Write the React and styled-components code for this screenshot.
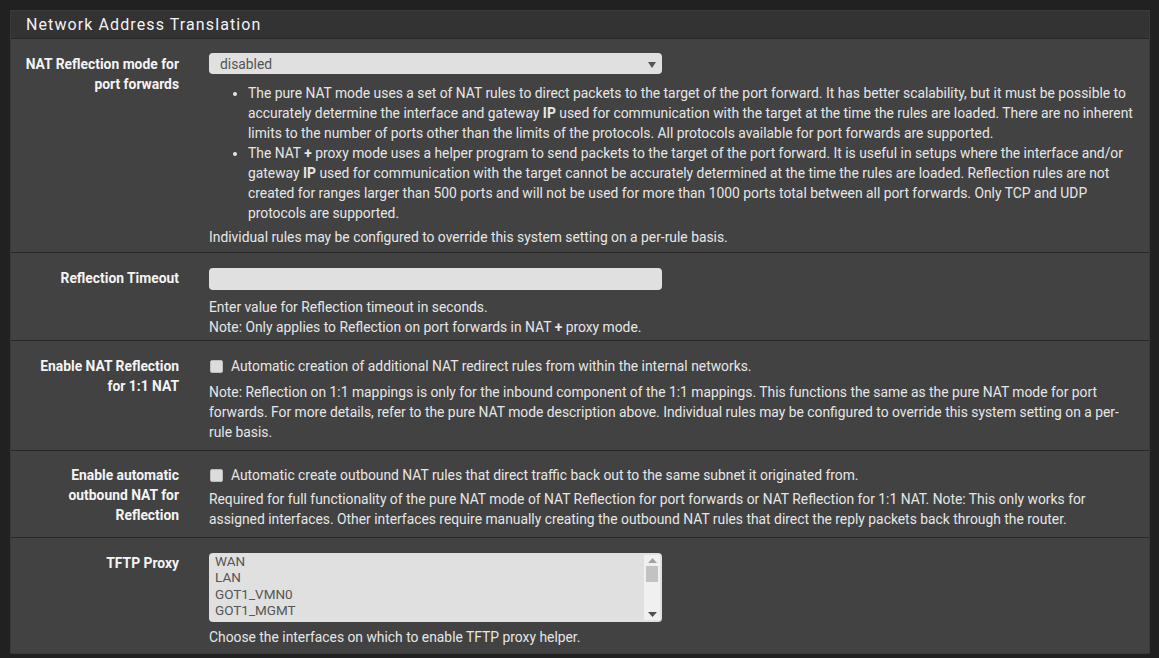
import React from "react";
import styled, { createGlobalStyle } from "styled-components";

const Global = createGlobalStyle`
  html, body { margin: 0; padding: 0; background: #212121; }
  body { font-family: Roboto, "Noto Sans", sans-serif; font-size: 13.85px; color: #e6e6e6; }
  * { box-sizing: border-box; }
`;

const Page = styled.div`
  padding: 10px 9px 6px 10px;
`;

const Panel = styled.section`
  width: 1140px;
  background: #424242;
  border: 1px solid #3a3a3a;
`;

const Heading = styled.h2`
  margin: 0;
  height: 28px;
  padding: 0 15px;
  display: flex;
  align-items: center;
  background: #333333;
  border-bottom: 1px solid #262626;
  font-family: Roboto, sans-serif;
  font-size: 16px;
  font-weight: 400;
  letter-spacing: 1.1px;
  color: #f2f2f2;
`;

const Row = styled.div`
  display: grid;
  grid-template-columns: 183px 1fr;
  padding: ${p => p.$pt ?? 15}px 0 ${p => p.$pb ?? 5}px;
  border-top: ${p => (p.$first ? "none" : "1px solid #262626")};
`;

const Label = styled.div`
  text-align: right;
  padding: 0 15px 0 12px;
  font-weight: 700;
  line-height: 20px;
  color: #f4f4f4;
  margin-top: ${p => p.$mt ?? 0}px;
`;

const Content = styled.div`
  padding: 0 15px;
  line-height: 20px;
`;

const SelectBox = styled.div`
  width: 453px;
  height: 21px;
  background: #e0e0e0;
  border-radius: 4px;
  display: flex;
  align-items: center;
  justify-content: space-between;
  padding: 0 6px 0 11px;
  color: #555;
  margin-top: -1px;
`;

const Caret = styled.span`
  width: 0;
  height: 0;
  border-left: 4px solid transparent;
  border-right: 4px solid transparent;
  border-top: 6px solid #555;
  margin-top: 2px;
`;

const TextInput = styled.div`
  width: 453px;
  height: 22px;
  background: #e0e0e0;
  border-radius: 4px;
`;

const List = styled.ul`
  margin: 9px 0 0;
  padding-left: 39px;
  li { line-height: 20px; }
`;

const Help = styled.div`
  margin-top: ${p => p.$mt ?? 5}px;
`;

const CheckLine = styled.label`
  display: flex;
  align-items: center;
  gap: 8px;
  padding-left: 1px;
`;

const Check = styled.span`
  width: 13px;
  height: 13px;
  background: #dcdcdc;
  border: 1px solid #bdbdbd;
  border-radius: 2px;
  flex: none;
`;

const ListBox = styled.div`
  width: 453px;
  height: 69px;
  background: #e0e0e0;
  border-radius: 4px;
  display: flex;
  overflow: hidden;
`;

const Options = styled.div`
  flex: 1;
  padding: 0 6px;
  color: #555;
  font-size: 13.5px;
  line-height: 16.3px;
`;

const Scrollbar = styled.div`
  width: 16px;
  margin: 2px 2px 2px 0;
  background: #f0f0f0;
  display: flex;
  flex-direction: column;
  align-items: center;
  justify-content: space-between;
  padding: 3px 0;
`;

const Thumb = styled.div`
  width: 12px;
  height: 16px;
  background: #c2c2c2;
  margin-top: 3px;
  margin-bottom: auto;
`;

const Arrow = ({ up, color }) => (
  <svg width="9" height="5" viewBox="0 0 9 5">
    <polygon points={up ? "0,5 4.5,0 9,5" : "0,0 9,0 4.5,5"} fill={color} />
  </svg>
);

export default function App() {
  return (
    <>
      <Global />
      <Page>
        <Panel>
          <Heading>Network Address Translation</Heading>

          <Row $first $pt={15} $pb={5}>
            <Label>NAT Reflection mode for port forwards</Label>
            <Content>
              <SelectBox>
                disabled
                <Caret />
              </SelectBox>
              <List>
                <li>
                  The pure NAT mode uses a set of NAT rules to direct packets to the target of the port forward. It has better scalability, but it must be possible to accurately determine the interface and gateway <b>IP</b> used for communication with the target at the time the rules are loaded. There are no inherent limits to the number of ports other than the limits of the protocols. All protocols available for port forwards are supported.
                </li>
                <li>
                  The NAT <b>+</b> proxy mode uses a helper program to send packets to the target of the port forward. It is useful in setups where the interface and/or gateway <b>IP</b> used for communication with the target cannot be accurately determined at the time the rules are loaded. Reflection rules are not created for ranges larger than 500 ports and will not be used for more than 1000 ports total between all port forwards. Only TCP and UDP protocols are supported.
                </li>
              </List>
              <Help $mt={4}>Individual rules may be configured to override this system setting on a per-rule basis.</Help>
            </Content>
          </Row>

          <Row $pt={15} $pb={3}>
            <Label>Reflection Timeout</Label>
            <Content>
              <TextInput />
              <Help $mt={7}>
                Enter value for Reflection timeout in seconds.
                <br />
                Note: Only applies to Reflection on port forwards in NAT <b>+</b> proxy mode.
              </Help>
            </Content>
          </Row>

          <Row $pt={15} $pb={8}>
            <Label>Enable NAT Reflection for 1:1 NAT</Label>
            <Content>
              <CheckLine>
                <Check />
                Automatic creation of additional NAT redirect rules from within the internal networks.
              </CheckLine>
              <Help $mt={6}>
                Note: Reflection on 1:1 mappings is only for the inbound component of the 1:1 mappings. This functions the same as the pure NAT mode for port forwards. For more details, refer to the pure NAT mode description above. Individual rules may be configured to override this system setting on a per-rule basis.
              </Help>
            </Content>
          </Row>

          <Row $pt={14} $pb={8}>
            <Label>Enable automatic outbound NAT for Reflection</Label>
            <Content>
              <CheckLine>
                <Check />
                Automatic create outbound NAT rules that direct traffic back out to the same subnet it originated from.
              </CheckLine>
              <Help $mt={4}>
                Required for full functionality of the pure NAT mode of NAT Reflection for port forwards or NAT Reflection for 1:1 NAT. Note: This only works for assigned interfaces. Other interfaces require manually creating the outbound NAT rules that direct the reply packets back through the router.
              </Help>
            </Content>
          </Row>

          <Row $pt={15} $pb={6}>
            <Label>TFTP Proxy</Label>
            <Content>
              <ListBox>
                <Options>
                  <div>WAN</div>
                  <div>LAN</div>
                  <div>GOT1_VMN0</div>
                  <div>GOT1_MGMT</div>
                </Options>
                <Scrollbar>
                  <Arrow up color="#a3a3a3" />
                  <Thumb />
                  <Arrow color="#505050" />
                </Scrollbar>
              </ListBox>
              <Help $mt={5}>Choose the interfaces on which to enable TFTP proxy helper.</Help>
            </Content>
          </Row>
        </Panel>
      </Page>
    </>
  );
}
